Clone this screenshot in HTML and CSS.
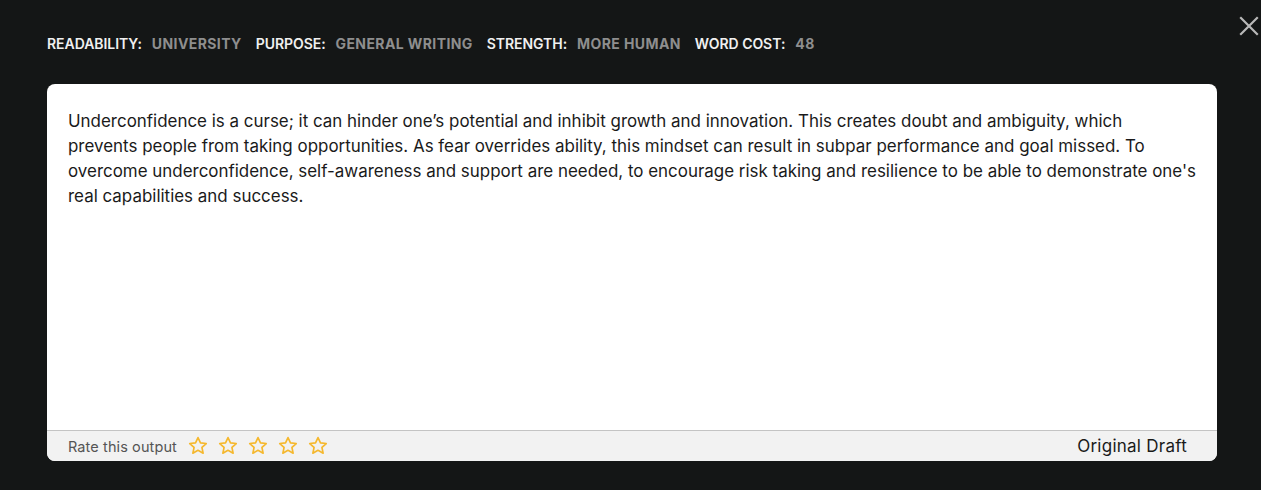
FILE: index.html
```html
<!DOCTYPE html>
<html>
<head>
<meta charset="utf-8">
<link rel="stylesheet" href="styles.css">
</head>
<body>
<div class="page">
  <button class="close" aria-label="Close">
    <svg width="20" height="20" viewBox="0 0 20 20"><path d="M2 2 L18 18 M18 2 L2 18" stroke="#b8b8b8" stroke-width="2.2" stroke-linecap="square"/></svg>
  </button>
  <div class="meta">
    <span class="label">READABILITY:</span><span class="value">UNIVERSITY</span>
    <span class="label">PURPOSE:</span><span class="value">GENERAL WRITING</span>
    <span class="label">STRENGTH:</span><span class="value">MORE HUMAN</span>
    <span class="label">WORD COST:</span><span class="value">48</span>
  </div>
  <div class="card">
    <div class="content">
      <p>Underconfidence is a curse; it can hinder one’s potential and inhibit growth and innovation. This creates doubt and ambiguity, which<br>prevents people from taking opportunities. As fear overrides ability, this mindset can result in subpar performance and goal missed. To<br>overcome underconfidence, self-awareness and support are needed, to encourage risk taking and resilience to be able to demonstrate one's<br>real capabilities and success.</p>
    </div>
    <div class="footer">
      <div class="rate">
        <span class="rate-text">Rate this output</span>
        <span class="stars">
          <svg class="star" viewBox="0 0 24 24"><path d="M12 2.8 L14.7 8.6 L21 9.3 L16.3 13.6 L17.6 19.9 L12 16.7 L6.4 19.9 L7.7 13.6 L3 9.3 L9.3 8.6 Z"/></svg>
          <svg class="star" viewBox="0 0 24 24"><path d="M12 2.8 L14.7 8.6 L21 9.3 L16.3 13.6 L17.6 19.9 L12 16.7 L6.4 19.9 L7.7 13.6 L3 9.3 L9.3 8.6 Z"/></svg>
          <svg class="star" viewBox="0 0 24 24"><path d="M12 2.8 L14.7 8.6 L21 9.3 L16.3 13.6 L17.6 19.9 L12 16.7 L6.4 19.9 L7.7 13.6 L3 9.3 L9.3 8.6 Z"/></svg>
          <svg class="star" viewBox="0 0 24 24"><path d="M12 2.8 L14.7 8.6 L21 9.3 L16.3 13.6 L17.6 19.9 L12 16.7 L6.4 19.9 L7.7 13.6 L3 9.3 L9.3 8.6 Z"/></svg>
          <svg class="star" viewBox="0 0 24 24"><path d="M12 2.8 L14.7 8.6 L21 9.3 L16.3 13.6 L17.6 19.9 L12 16.7 L6.4 19.9 L7.7 13.6 L3 9.3 L9.3 8.6 Z"/></svg>
        </span>
      </div>
      <div class="draft">Original Draft</div>
    </div>
  </div>
</div>
</body>
</html>
```

FILE: styles.css
```css
html, body {
  margin: 0;
  padding: 0;
  background: #141616;
  height: 100%;
}
body {
  font-family: Inter, "Noto Sans", sans-serif;
}
.page {
  position: relative;
  padding: 33px 44px 0 47px;
}
.close {
  position: absolute;
  top: 15px;
  right: 1px;
  width: 22px;
  height: 22px;
  padding: 0;
  background: none;
  border: none;
  display: flex;
  align-items: center;
  justify-content: center;
}
.meta {
  display: flex;
  align-items: center;
  height: 20px;
  font-size: 14px;
}
.label {
  color: #f0f0f0;
  font-weight: 600;
  letter-spacing: -0.05px;
  margin-right: 10px;
}
.value {
  color: #8e8e8e;
  font-weight: 700;
  letter-spacing: 0.4px;
  margin-right: 14px;
}
.card {
  margin-top: 31px;
  background: #fff;
  border-radius: 8px;
  height: 377px;
  display: flex;
  flex-direction: column;
  overflow: hidden;
}
.content {
  flex: 1;
  padding: 25px 12px 0 21px;
}
.content p {
  margin: 0;
  font-size: 16.95px;
  line-height: 25px;
  color: #1a1a1a;
  white-space: nowrap;
}
.footer {
  height: 30px;
  background: #f2f2f2;
  border-top: 1px solid #c4c4c4;
  display: flex;
  align-items: center;
  justify-content: space-between;
  padding: 0 30px 0 21px;
}
.rate {
  display: flex;
  align-items: center;
}
.rate-text {
  font-size: 14.5px;
  letter-spacing: 0.1px;
  color: #555;
}
.stars {
  display: flex;
  gap: 8px;
  margin-left: 10px;
}
.star {
  width: 22px;
  height: 22px;
  fill: none;
  stroke: #f5b82e;
  stroke-width: 1.8;
  stroke-linejoin: round;
}
.draft {
  font-size: 17px;
  letter-spacing: 0.25px;
  color: #1a1a1a;
}
```
